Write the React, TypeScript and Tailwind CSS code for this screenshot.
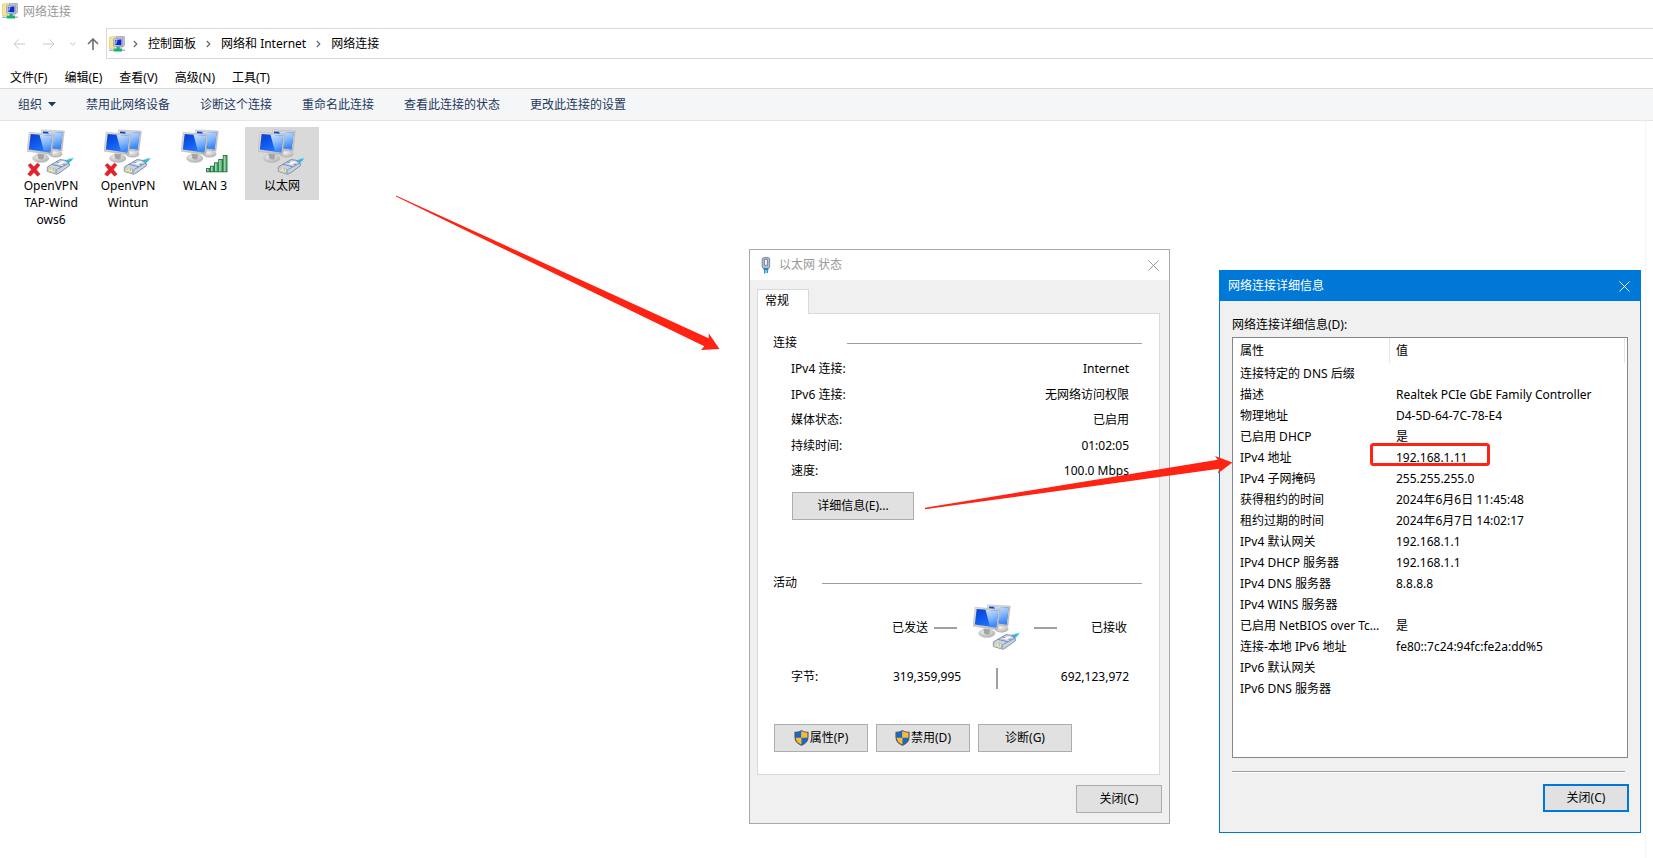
import { clsx } from "clsx";
import type { ReactNode } from "react";

const menus = ["文件(F)", "编辑(E)", "查看(V)", "高级(N)", "工具(T)"];

const commands = [
  "禁用此网络设备",
  "诊断这个连接",
  "重命名此连接",
  "查看此连接的状态",
  "更改此连接的设置",
];

const crumbs = ["控制面板", "网络和 Internet", "网络连接"];

type Badge = "disconnected" | "wifi" | "plug";

const adapters: { name: string; badge: Badge; selected?: boolean }[] = [
  { name: "OpenVPN TAP-Windows6", badge: "disconnected" },
  { name: "OpenVPN Wintun", badge: "disconnected" },
  { name: "WLAN 3", badge: "wifi" },
  { name: "以太网", badge: "plug", selected: true },
];

const statusRows = [
  ["IPv4 连接:", "Internet"],
  ["IPv6 连接:", "无网络访问权限"],
  ["媒体状态:", "已启用"],
  ["持续时间:", "01:02:05"],
  ["速度:", "100.0 Mbps"],
];

const detailRows = [
  ["连接特定的 DNS 后缀", ""],
  ["描述", "Realtek PCIe GbE Family Controller"],
  ["物理地址", "D4-5D-64-7C-78-E4"],
  ["已启用 DHCP", "是"],
  ["IPv4 地址", "192.168.1.11"],
  ["IPv4 子网掩码", "255.255.255.0"],
  ["获得租约的时间", "2024年6月6日 11:45:48"],
  ["租约过期的时间", "2024年6月7日 14:02:17"],
  ["IPv4 默认网关", "192.168.1.1"],
  ["IPv4 DHCP 服务器", "192.168.1.1"],
  ["IPv4 DNS 服务器", "8.8.8.8"],
  ["IPv4 WINS 服务器", ""],
  ["已启用 NetBIOS over Tcpip", "是"],
  ["连接-本地 IPv6 地址", "fe80::7c24:94fc:fe2a:dd%5"],
  ["IPv6 默认网关", ""],
  ["IPv6 DNS 服务器", ""],
];

function Gradients() {
  return (
    <svg width="0" height="0" className="absolute" aria-hidden="true">
      <defs>
        <linearGradient id="screen" x1="0" y1="0" x2="0.6" y2="1">
          <stop offset="0" stopColor="#0a3fd0" />
          <stop offset="0.5" stopColor="#0f58ec" />
          <stop offset="1" stopColor="#2279ff" />
        </linearGradient>
        <linearGradient id="glare" x1="0" y1="0" x2="0.3" y2="1">
          <stop offset="0" stopColor="#cfe3ff" />
          <stop offset="0.55" stopColor="#86b8fc" />
          <stop offset="1" stopColor="#3a88fb" />
        </linearGradient>
        <linearGradient id="frame" x1="0" y1="0" x2="1" y2="1">
          <stop offset="0" stopColor="#e4e3e0" />
          <stop offset="1" stopColor="#bab8b3" />
        </linearGradient>
        <radialGradient id="stand" cx="0.4" cy="0.3" r="0.8">
          <stop offset="0" stopColor="#f2f2f2" />
          <stop offset="1" stopColor="#a8a8a8" />
        </radialGradient>
        <linearGradient id="bar" x1="0" y1="0" x2="1" y2="0">
          <stop offset="0" stopColor="#c4efd0" />
          <stop offset="1" stopColor="#35a05b" />
        </linearGradient>
      </defs>
    </svg>
  );
}

function AdapterIcon({ badge }: { badge: Badge }) {
  return (
    <svg width="48" height="48" viewBox="0 0 48 48" className="shrink-0" aria-hidden="true">
      <ellipse cx="28.5" cy="25" rx="7" ry="3.4" fill="url(#stand)" />
      <path d="M14.5 .8 37.4 2 35 22.2 14 20Z" fill="url(#frame)" stroke="#b0aeaa" strokeWidth=".4" />
      <path d="M16 2.4 35.6 3.5 33.5 20.4 16 18Z" fill="url(#screen)" />
      <path d="M21 2.7 35.6 3.5 33.5 20.4 27 19.5Z" fill="url(#glare)" />
      <ellipse cx="13.8" cy="29.3" rx="8.2" ry="4.3" fill="url(#stand)" stroke="#b8b8b8" strokeWidth=".4" />
      <path d="M10.5 24.5 17 25.5 16.5 30Q13 31.5 11 29Z" fill="#a4a4a4" />
      <path d="M2.2 3.3 27 5.3 24.8 25.8 0 22.2Z" fill="url(#frame)" stroke="#a8a6a1" strokeWidth=".4" />
      <path d="M3.7 5 25.2 6.8 23.2 23.4 1.8 20.5Z" fill="url(#screen)" />
      <path d="M12.5 5.8 25.2 6.8 23.2 23.4 17 22.6Z" fill="url(#glare)" />
      {badge === "wifi" ? (
        <g fill="url(#bar)" stroke="#1d7038" strokeWidth=".9">
          <rect x="25.5" y="39.6" width="3.4" height="3.2" />
          <rect x="29.5" y="37.2" width="3.4" height="5.6" />
          <rect x="33.5" y="33.8" width="3.6" height="9" />
          <rect x="37.7" y="30.5" width="3.8" height="12.3" />
          <rect x="42.2" y="26.5" width="3.8" height="16.3" />
        </g>
      ) : (
        <g strokeLinejoin="round">
          <path d="M36.5 32.5Q40 30 46.5 29 45 32.5 40.5 35Z" fill="#35b4e4" stroke="#9adcf2" strokeWidth=".6" />
          <path d="M20.3 38 27 34 33 30.6 38 31.2 42 34 42.6 36.5 33 43.5 29.8 45.3 20.3 42.4Z" fill="#c8d3e3" stroke="#667b9c" strokeWidth=".8" />
          <path d="M20.3 38 30.5 40.2 29.8 45.3 20.3 42.4Z" fill="#a3b1c6" />
          <path d="M22 38.6v3.2h2v-3M25.2 39.5v3.4h2.2v-3" fill="none" stroke="#f2e9a0" strokeWidth="1.2" />
          <path d="M30.5 40.2 42 34M25 35.4 34.6 37.7M29.5 33 38 35.6" fill="none" stroke="#6b7fa0" strokeWidth=".8" />
          <path d="M30.2 34.6 35.5 32 38.6 33 33.6 35.8Z" fill="#f8fbfe" />
        </g>
      )}
      {badge === "disconnected" && (
        <path
          d="M1 36.2 3.6 34.4 6.9 37.8 10.4 34.1 13 36 9.4 40.5 13.2 45.2 10.4 47.2 7 43.4 3.4 47.2 .6 45.2 4.4 40.6Z"
          fill="#e5202a"
          stroke="#c9343a"
          strokeWidth=".5"
        />
      )}
    </svg>
  );
}

function FolderIcon() {
  return (
    <svg width="16" height="16" viewBox="0 0 16 16" className="shrink-0" aria-hidden="true">
      <path d="M.4 1.2 6 .4V12L.4 12.6Z" fill="#f7e595" stroke="#dcc568" strokeWidth=".7" />
      <path d="M7 .6H15.4V9.5L13 11H7Z" fill="#c9ced4" stroke="#8e979f" strokeWidth=".7" />
      <path d="M4.6 3 13.6 2V10.8L4.6 10Z" fill="#e8edf3" stroke="#7f8da0" strokeWidth=".7" />
      <path d="M5.8 4 12.5 3.3V9.5L5.8 8.9Z" fill="#1226c9" />
      <path d="M6.2 4.4 8.6 4.1 7.2 8.6 6.2 8.5Z" fill="#8fa6f2" />
      <path d="M7.6 11H10.6V12.6H13V15.6H4.5V12.6H7.6Z" fill="#14b36b" />
      <path d="M.2 13.4H4.5V15H.2ZM13 13.4H16V15H13Z" fill="#a9b7bd" />
    </svg>
  );
}

function PlugIcon() {
  return (
    <svg width="10" height="17" viewBox="0 0 10 17" className="shrink-0" aria-hidden="true">
      <path d="M1.2 2.2Q1.2.7 2.6.7H7.2Q8.6.7 8.6 2.2V9.8L7.6 11.4H2.2L1.2 9.8Z" fill="#b4c0d4" stroke="#76849c" />
      <path d="M3.4 2.3H6.4V8.4H3.4Z" fill="#f4f7fb" stroke="#6a7890" strokeWidth=".9" />
      <path d="M2.6 11.4H7.4V13H2.6Z" fill="#3c6f94" />
      <path d="M3.8 12.5V16.5M6.3 12.5V16" stroke="#1b9fd0" strokeWidth="1.6" />
    </svg>
  );
}

function ShieldIcon() {
  return (
    <svg width="15" height="16" viewBox="0 0 15 16" className="shrink-0" aria-hidden="true">
      <path d="M7.5.6Q4.5 2.5 1 2.3V7Q1 12.5 7.5 15.3Z" fill="#1769c5" />
      <path d="M7.5.6Q10.5 2.5 14 2.3V7Q14 12.5 7.5 15.3Z" fill="#fdb92f" />
      <path d="M7.5 7.7H1.1Q1.5 12.6 7.5 15.3Z" fill="#fdb92f" />
      <path d="M7.5 7.7H13.9Q13.5 12.6 7.5 15.3Z" fill="#1769c5" />
      <path d="M7.5.6Q4.5 2.5 1 2.3V7Q1 12.5 7.5 15.3 14 12.5 14 7V2.3Q10.5 2.5 7.5.6Z" fill="none" stroke="#4d5866" strokeWidth="1.1" />
    </svg>
  );
}

function CloseIcon() {
  return (
    <svg width="11" height="11" viewBox="0 0 11 11" fill="none" stroke="currentColor" aria-hidden="true">
      <path d="M.5.5 10.5 10.5M10.5.5.5 10.5" />
    </svg>
  );
}

function NavButton({ label, path, className }: { label: string; path: string; className: string }) {
  return (
    <button aria-label={label} className={clsx("shrink-0", className)}>
      <svg width="12" height="12" viewBox="0 0 12 12" fill="none" stroke="currentColor" aria-hidden="true">
        <path d={path} />
      </svg>
    </button>
  );
}

function DialogButton({
  children,
  primary,
  className,
}: {
  children: ReactNode;
  primary?: boolean;
  className: string;
}) {
  return (
    <button
      className={clsx(
        "flex h-7 items-center justify-center gap-px bg-[#e1e1e1]",
        primary ? "border-2 border-[#0078d7]" : "border border-[#adadad]",
        className
      )}
    >
      {children}
    </button>
  );
}

function Explorer() {
  return (
    <>
      <header>
        <div className="flex h-7 items-start gap-[5px] pt-[3px] pl-[2px] text-[#999]">
          <FolderIcon />
          <h1 className="leading-[18px]">网络连接</h1>
        </div>
        <div className="flex h-[31px] items-center">
          <nav className="flex w-[106px] shrink-0 items-center pl-[13px]">
            <NavButton label="后退" path="M12 6H1M5.5 1.5 1 6 5.5 10.5" className="text-[#c8c8c8]" />
            <NavButton label="前进" path="M0 6H11M6.5 1.5 11 6 6.5 10.5" className="ml-[18px] text-[#c8c8c8]" />
            <NavButton label="最近位置" path="M3 4.5 5.7 7 8.4 4.5" className="ml-3 text-[#c0c0c0]" />
            <NavButton label="向上" path="M6 12V1M1 6 6 1 11 6" className="ml-2 text-[#707070] [&_path]:[stroke-width:1.6]" />
          </nav>
          <div className="flex h-full flex-1 items-center border-y border-l border-[#d9d9d9] pl-[2px]">
            <FolderIcon />
            {crumbs.map((crumb) => (
              <span key={crumb} className="flex items-center">
                <svg width="5" height="8" viewBox="0 0 5 8" className="mr-[10px] ml-2" aria-hidden="true">
                  <path d="M.8 1 3.8 4 .8 7" fill="none" stroke="#666" strokeWidth="1.2" />
                </svg>
                <a href="#" className="mr-[2px]">{crumb}</a>
              </span>
            ))}
          </div>
        </div>
        <nav className="flex gap-[17px] pt-[11px] pb-[2px] pl-[10px]">
          {menus.map((menu) => (
            <button key={menu}>{menu}</button>
          ))}
        </nav>
        <div className="flex h-[33px] items-center gap-[30px] border-y border-t-[#d9d9d9] border-b-[#e5e6e8] bg-[#f5f6f8] pl-[18px] text-[#1e395b]">
          <button className="flex items-center gap-[6px]">
            组织
            <svg width="8" height="5" viewBox="0 0 8 5" aria-hidden="true">
              <path d="M0 0H8L4 4.5Z" fill="currentColor" />
            </svg>
          </button>
          {commands.map((command) => (
            <button key={command}>{command}</button>
          ))}
        </div>
      </header>
      <main className="flex flex-1">
        <ul className="flex flex-1 items-start gap-[3px] pt-[6px] pl-[14px]">
          {adapters.map((adapter) => (
            <li
              key={adapter.name}
              className={clsx(
                "flex w-[74px] flex-col items-center pt-[2px] pb-[6px]",
                adapter.selected && "bg-[#d9d9d9]"
              )}
            >
              <AdapterIcon badge={adapter.badge} />
              <span className="w-[59px] text-center leading-[17px] break-all">{adapter.name}</span>
            </li>
          ))}
        </ul>
        <div className="w-2 border-l border-[#f5f5f5]" />
      </main>
    </>
  );
}

function StatusDialog() {
  return (
    <section className="absolute top-[249px] left-[749px] w-[421px] border border-[#a9a9a9] bg-[#f0f0f0]">
      <div className="flex h-[30px] items-center bg-white pr-[10px] pl-[11px] text-[#999]">
        <PlugIcon />
        <h2 className="ml-2">以太网 状态</h2>
        <button aria-label="关闭" className="ml-auto">
          <CloseIcon />
        </button>
      </div>
      <div className="px-[7px] pt-[9px] pb-[10px]">
        <div className="relative z-10 -mb-px flex h-[25px] w-[52px] border border-b-0 border-[#d9d9d9] bg-white pt-[3px] pl-[7px]">
          <button className="h-4">常规</button>
        </div>
        <div className="mr-[2px] border border-[#d9d9d9] bg-white pt-[21px] pr-[17px] pb-[22px] pl-[15px]">
          <div className="flex items-center gap-[50px]">
            <h3>连接</h3>
            <div className="h-px flex-1 bg-[#a0a0a0]" />
          </div>
          <dl className="mt-[10px] flex h-[118px] flex-col justify-between pr-[13px] pl-[18px]">
            {statusRows.map(([label, value]) => (
              <div key={label} className="flex justify-between">
                <dt>{label}</dt>
                <dd>{value}</dd>
              </div>
            ))}
          </dl>
          <DialogButton className="mt-[13px] ml-[19px] w-[122px]">详细信息(E)...</DialogButton>

          <div className="mt-[55px] flex items-center gap-[25px]">
            <h3>活动</h3>
            <div className="h-px flex-1 bg-[#a0a0a0]" />
          </div>
          <div className="mt-[13px] flex items-center pr-[15px] pl-[119px]">
            <span>已发送</span>
            <div className="ml-[6px] h-[2px] w-[23px] bg-[#a0a0a0]" />
            <div className="mr-[13px] ml-4">
              <AdapterIcon badge="plug" />
            </div>
            <div className="h-[2px] w-[23px] bg-[#a0a0a0]" />
            <span className="ml-auto">已接收</span>
          </div>
          <div className="mt-4 flex pr-[13px] pl-[18px] leading-[18px]">
            <span className="w-[102px]">字节:</span>
            <span className="w-[103px]">319,359,995</span>
            <div className="h-[21px] w-[2px] bg-[#a0a0a0]" />
            <span className="ml-auto">692,123,972</span>
          </div>
          <div className="mt-[35px] flex gap-2 pl-px">
            <DialogButton className="w-[94px]">
              <ShieldIcon />
              属性(P)
            </DialogButton>
            <DialogButton className="w-[94px]">
              <ShieldIcon />
              禁用(D)
            </DialogButton>
            <DialogButton className="w-[94px]">诊断(G)</DialogButton>
          </div>
        </div>
        <DialogButton className="mt-[10px] ml-auto w-[86px]">关闭(C)</DialogButton>
      </div>
    </section>
  );
}

function DetailsDialog() {
  return (
    <section className="absolute top-[270px] left-[1219px] w-[422px] border border-[#0078d7] bg-[#f0f0f0]">
      <div className="flex h-[30px] items-center justify-between bg-[#0078d7] pr-[10px] pl-2 text-white">
        <h2>网络连接详细信息</h2>
        <button aria-label="关闭">
          <CloseIcon />
        </button>
      </div>
      <div className="pt-4 pr-[11px] pb-5 pl-3">
        <h3 id="details-label">网络连接详细信息(D):</h3>
        <div className="mt-1 mr-px h-[421px] border border-[#828790] bg-white pr-[2px]">
          <table aria-labelledby="details-label" className="w-full table-fixed border-separate border-spacing-0 text-left">
            <thead>
              <tr className="h-[25px]">
                <th className="w-[157px] border-r border-[#e5e5e5] pl-[7px] font-normal">属性</th>
                <th className="border-r border-[#e5e5e5] pl-[6px] font-normal">值</th>
              </tr>
            </thead>
            <tbody>
              {detailRows.map(([name, value]) => (
                <tr key={name} className="h-[21px]">
                  <td className="truncate pr-2 pl-[7px]">{name}</td>
                  <td className="pl-[6px]">{value}</td>
                </tr>
              ))}
            </tbody>
          </table>
        </div>
        <div className="mt-[13px] mr-1 h-[2px] border-b border-white bg-[#a0a0a0]" />
        <DialogButton primary className="mt-[11px] ml-auto w-[86px]">
          关闭(C)
        </DialogButton>
      </div>
    </section>
  );
}

// Red arrows and the frame around the IPv4 address
function Annotations() {
  return (
    <svg
      width="1653"
      height="858"
      viewBox="0 0 1653 858"
      className="pointer-events-none absolute top-0 left-0"
      aria-hidden="true"
    >
      <path d="M396 195.5 708.7 338.3V333.3L719.5 349 701 350 704.3 346.3 396 196.6Z" fill="#ff2313" />
      <path d="M925 507.8 1217.7 459.7 1215 456 1232.4 462.4 1217.7 473.4 1219.3 468.7 925 509.2Z" fill="#ff2313" />
      <rect x="1371.5" y="444.5" width="117" height="20" rx="2" fill="none" stroke="#ff2313" strokeWidth="3" />
    </svg>
  );
}

export default function App() {
  return (
    <div className="relative flex min-h-screen flex-col overflow-hidden bg-white font-['Noto_Sans','Noto_Sans_CJK_SC',sans-serif] text-xs text-black">
      <Gradients />
      <Explorer />
      <StatusDialog />
      <DetailsDialog />
      <Annotations />
    </div>
  );
}
